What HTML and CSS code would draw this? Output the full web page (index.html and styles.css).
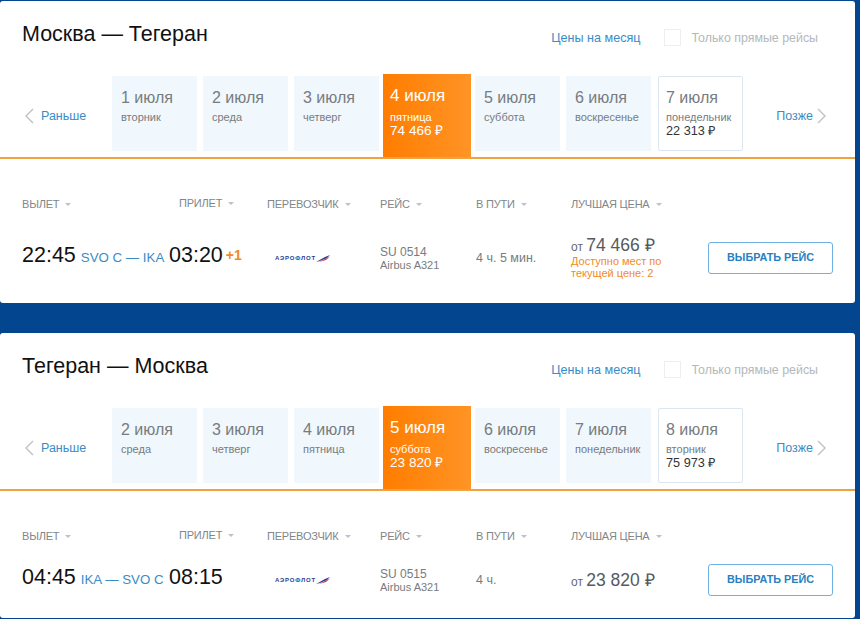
FILE: index.html
```html
<!DOCTYPE html>
<html lang="ru">
<head>
  <meta charset="UTF-8">
  <title>Москва — Тегеран</title>
  <link rel="stylesheet" href="styles.css">
</head>
<body>

  <section class="card">
    <div class="card-head">
      <h2>Москва — Тегеран</h2>
      <a class="month-link" href="#">Цены на месяц</a>
      <label class="direct"><span class="checkbox"></span>Только прямые рейсы</label>
    </div>

    <div class="dates">
      <a class="nav prev" href="#">
        <svg width="10" height="16" viewBox="0 0 10 16"><polyline points="9,1 2,8 9,15"/></svg>
        Раньше
      </a>
      <div class="tab"><b>1 июля</b><span>вторник</span></div>
      <div class="tab"><b>2 июля</b><span>среда</span></div>
      <div class="tab"><b>3 июля</b><span>четверг</span></div>
      <div class="tab active"><b>4 июля</b><span>пятница</span><em>74 466 ₽</em></div>
      <div class="tab"><b>5 июля</b><span>суббота</span></div>
      <div class="tab"><b>6 июля</b><span>воскресенье</span></div>
      <div class="tab priced"><b>7 июля</b><span>понедельник</span><em>22 313 ₽</em></div>
      <a class="nav next" href="#">
        Позже
        <svg width="10" height="16" viewBox="0 0 10 16"><polyline points="1,1 8,8 1,15"/></svg>
      </a>
    </div>

    <div class="columns">
      <span>ВЫЛЕТ</span>
      <span class="raised">ПРИЛЕТ</span>
      <span>ПЕРЕВОЗЧИК</span>
      <span>РЕЙС</span>
      <span>В ПУТИ</span>
      <span>ЛУЧШАЯ ЦЕНА</span>
    </div>

    <div class="flight tall">
      <div class="time">22:45 <small>SVO C — IKA</small></div>
      <div class="time">03:20<i>+1</i></div>
      <div class="logo">
        <span>АЭРОФЛОТ</span>
        <svg width="14" height="7" viewBox="0 0 14 7"><path d="M0 7 L9 2 L14 0 L11 3 L4 6 Z" fill="#2b3f8f"/><path d="M3 7 L10 3.5 L14 1.5 L10 5 Z" fill="#d8324a"/></svg>
      </div>
      <div class="number">SU 0514<small>Airbus A321</small></div>
      <div class="duration">4 ч. 5 мин.</div>
      <div class="price">
        <p>от <strong>74 466 ₽</strong></p>
        <p class="seats">Доступно мест по текущей цене: 2</p>
      </div>
      <button>ВЫБРАТЬ РЕЙС</button>
    </div>
  </section>

  <section class="card">
    <div class="card-head">
      <h2>Тегеран — Москва</h2>
      <a class="month-link" href="#">Цены на месяц</a>
      <label class="direct"><span class="checkbox"></span>Только прямые рейсы</label>
    </div>

    <div class="dates">
      <a class="nav prev" href="#">
        <svg width="10" height="16" viewBox="0 0 10 16"><polyline points="9,1 2,8 9,15"/></svg>
        Раньше
      </a>
      <div class="tab"><b>2 июля</b><span>среда</span></div>
      <div class="tab"><b>3 июля</b><span>четверг</span></div>
      <div class="tab"><b>4 июля</b><span>пятница</span></div>
      <div class="tab active"><b>5 июля</b><span>суббота</span><em>23 820 ₽</em></div>
      <div class="tab"><b>6 июля</b><span>воскресенье</span></div>
      <div class="tab"><b>7 июля</b><span>понедельник</span></div>
      <div class="tab priced"><b>8 июля</b><span>вторник</span><em>75 973 ₽</em></div>
      <a class="nav next" href="#">
        Позже
        <svg width="10" height="16" viewBox="0 0 10 16"><polyline points="1,1 8,8 1,15"/></svg>
      </a>
    </div>

    <div class="columns">
      <span>ВЫЛЕТ</span>
      <span class="raised">ПРИЛЕТ</span>
      <span>ПЕРЕВОЗЧИК</span>
      <span>РЕЙС</span>
      <span>В ПУТИ</span>
      <span>ЛУЧШАЯ ЦЕНА</span>
    </div>

    <div class="flight">
      <div class="time">04:45 <small>IKA — SVO C</small></div>
      <div class="time">08:15</div>
      <div class="logo">
        <span>АЭРОФЛОТ</span>
        <svg width="14" height="7" viewBox="0 0 14 7"><path d="M0 7 L9 2 L14 0 L11 3 L4 6 Z" fill="#2b3f8f"/><path d="M3 7 L10 3.5 L14 1.5 L10 5 Z" fill="#d8324a"/></svg>
      </div>
      <div class="number">SU 0515<small>Airbus A321</small></div>
      <div class="duration">4 ч.</div>
      <div class="price">
        <p>от <strong>23 820 ₽</strong></p>
      </div>
      <button>ВЫБРАТЬ РЕЙС</button>
    </div>
  </section>

</body>
</html>
```

FILE: styles.css
```css
html, body {
  margin: 0;
  height: 619px;
  overflow: hidden;
}

body {
  background: #03468f;
  padding-top: 1px;
  box-sizing: border-box;
  font-family: "Liberation Sans", Arial, sans-serif;
  color: #777c80;
}

.card {
  width: 855px;
  background: #ffffff;
  border-radius: 3px;
  padding-bottom: 22px;
}

.card + .card {
  margin-top: 30px;
}

.card-head {
  display: flex;
  align-items: center;
  height: 73px;
  padding: 0 37px 0 22px;
  box-sizing: border-box;
}

.card-head h2 {
  margin: 0 auto 7px 0;
  font-size: 21.5px;
  font-weight: normal;
  color: #111111;
}

.month-link {
  font-size: 12.6px;
  color: #3a8cc6;
  text-decoration: none;
  margin-right: 24px;
}

.direct {
  display: flex;
  align-items: center;
  font-size: 12.4px;
  color: #b4b8bb;
}

.checkbox {
  width: 15px;
  height: 15px;
  border: 1px solid #eeeeee;
  margin-right: 10px;
}

.dates {
  display: flex;
  height: 85px;
  box-sizing: border-box;
  border-bottom: 2px solid #f0a23e;
}

.nav {
  display: flex;
  align-items: center;
  gap: 7px;
  font-size: 12.5px;
  color: #3a8cc6;
  text-decoration: none;
  height: 84px;
}

.nav svg {
  fill: none;
  stroke: #bcc2c6;
  stroke-width: 1.4;
}

.prev {
  width: 112px;
  padding-left: 24px;
  box-sizing: border-box;
}

.next {
  margin-left: auto;
  padding-right: 28px;
  gap: 4px;
}

.tab {
  width: 85px;
  height: 75px;
  margin: 2px 6px 0 0;
  padding: 13px 0 0 9px;
  box-sizing: border-box;
  background: #f0f7fd;
  font-size: 11px;
  line-height: 13px;
}

.tab b {
  display: block;
  font-size: 16px;
  font-weight: normal;
  line-height: 18px;
  margin-bottom: 4px;
}

.tab span {
  display: block;
}

.tab em {
  display: block;
  font-style: normal;
  font-size: 12.7px;
  line-height: 15px;
}

.tab.active {
  width: 88px;
  height: 83px;
  margin: 0 4px 0 -2px;
  padding: 13px 0 0 7px;
  background: linear-gradient(to right, #ff7d00, #ff9426);
  color: #ffffff;
}

.tab.active b {
  font-size: 17px;
  margin-bottom: 6px;
}

.tab.active em {
  font-size: 13.6px;
  line-height: 14px;
}

.tab.priced {
  background: #ffffff;
  border: 1px solid #dbe6ee;
  border-radius: 2px;
  padding: 12px 0 0 7px;
  margin-left: 1px;
  margin-right: 0;
}

.tab.priced em {
  color: #333333;
}

.columns {
  display: grid;
  grid-template-columns: 157px 88px 113px 96px 95px 137px;
  margin-top: 37px;
  padding-left: 22px;
  height: 16px;
  align-items: center;
  font-size: 11px;
  letter-spacing: -0.2px;
  color: #80868a;
}

.columns span::after {
  content: "";
  display: inline-block;
  margin-left: 6px;
  vertical-align: 2px;
  border-left: 3px solid transparent;
  border-right: 3px solid transparent;
  border-top: 3px solid #bcc2c6;
}

.columns .raised {
  margin-top: -3px;
}

.flight {
  display: grid;
  grid-template-columns: 147px 98px 113px 96px 95px 137px 125px;
  align-items: center;
  margin-top: 20px;
  padding-left: 22px;
  height: 32px;
}

.flight.tall {
  height: 49px;
}

.time {
  font-size: 21.5px;
  color: #111111;
  white-space: nowrap;
  margin-bottom: 5px;
}

.time small {
  font-size: 13.3px;
  color: #3a8cc6;
  margin-left: -1px;
}

.time i {
  font-style: normal;
  font-weight: bold;
  font-size: 14px;
  color: #f28a1e;
  margin-left: 3px;
  vertical-align: 2px;
}

.logo {
  display: flex;
  align-items: center;
  padding-left: 8px;
  color: #1f3f8f;
  font-size: 6px;
  font-weight: bold;
  letter-spacing: 0.8px;
}

.number {
  font-size: 12px;
  color: #777c80;
}

.number small {
  display: block;
  font-size: 11px;
}

.duration {
  font-size: 12.5px;
}

.price {
  margin-bottom: 2px;
}

.tall .price {
  margin-bottom: 5px;
}

.price p {
  margin: 0;
  font-size: 12px;
  color: #666b70;
}

.price strong {
  font-size: 17.5px;
  font-weight: normal;
  color: #555a60;
}

.price .seats {
  width: 100px;
  margin-top: -1px;
  font-size: 11px;
  line-height: 12px;
  color: #f28a1e;
}

button {
  height: 32px;
  margin-bottom: 1px;
  padding: 0 0 2px;
  background: #ffffff;
  border: 1px solid #6fb1e0;
  border-radius: 3px;
  font-family: inherit;
  font-size: 10.8px;
  font-weight: bold;
  color: #2a7fc0;
}

.flight:not(.tall) button {
  margin-bottom: 0;
}
```
